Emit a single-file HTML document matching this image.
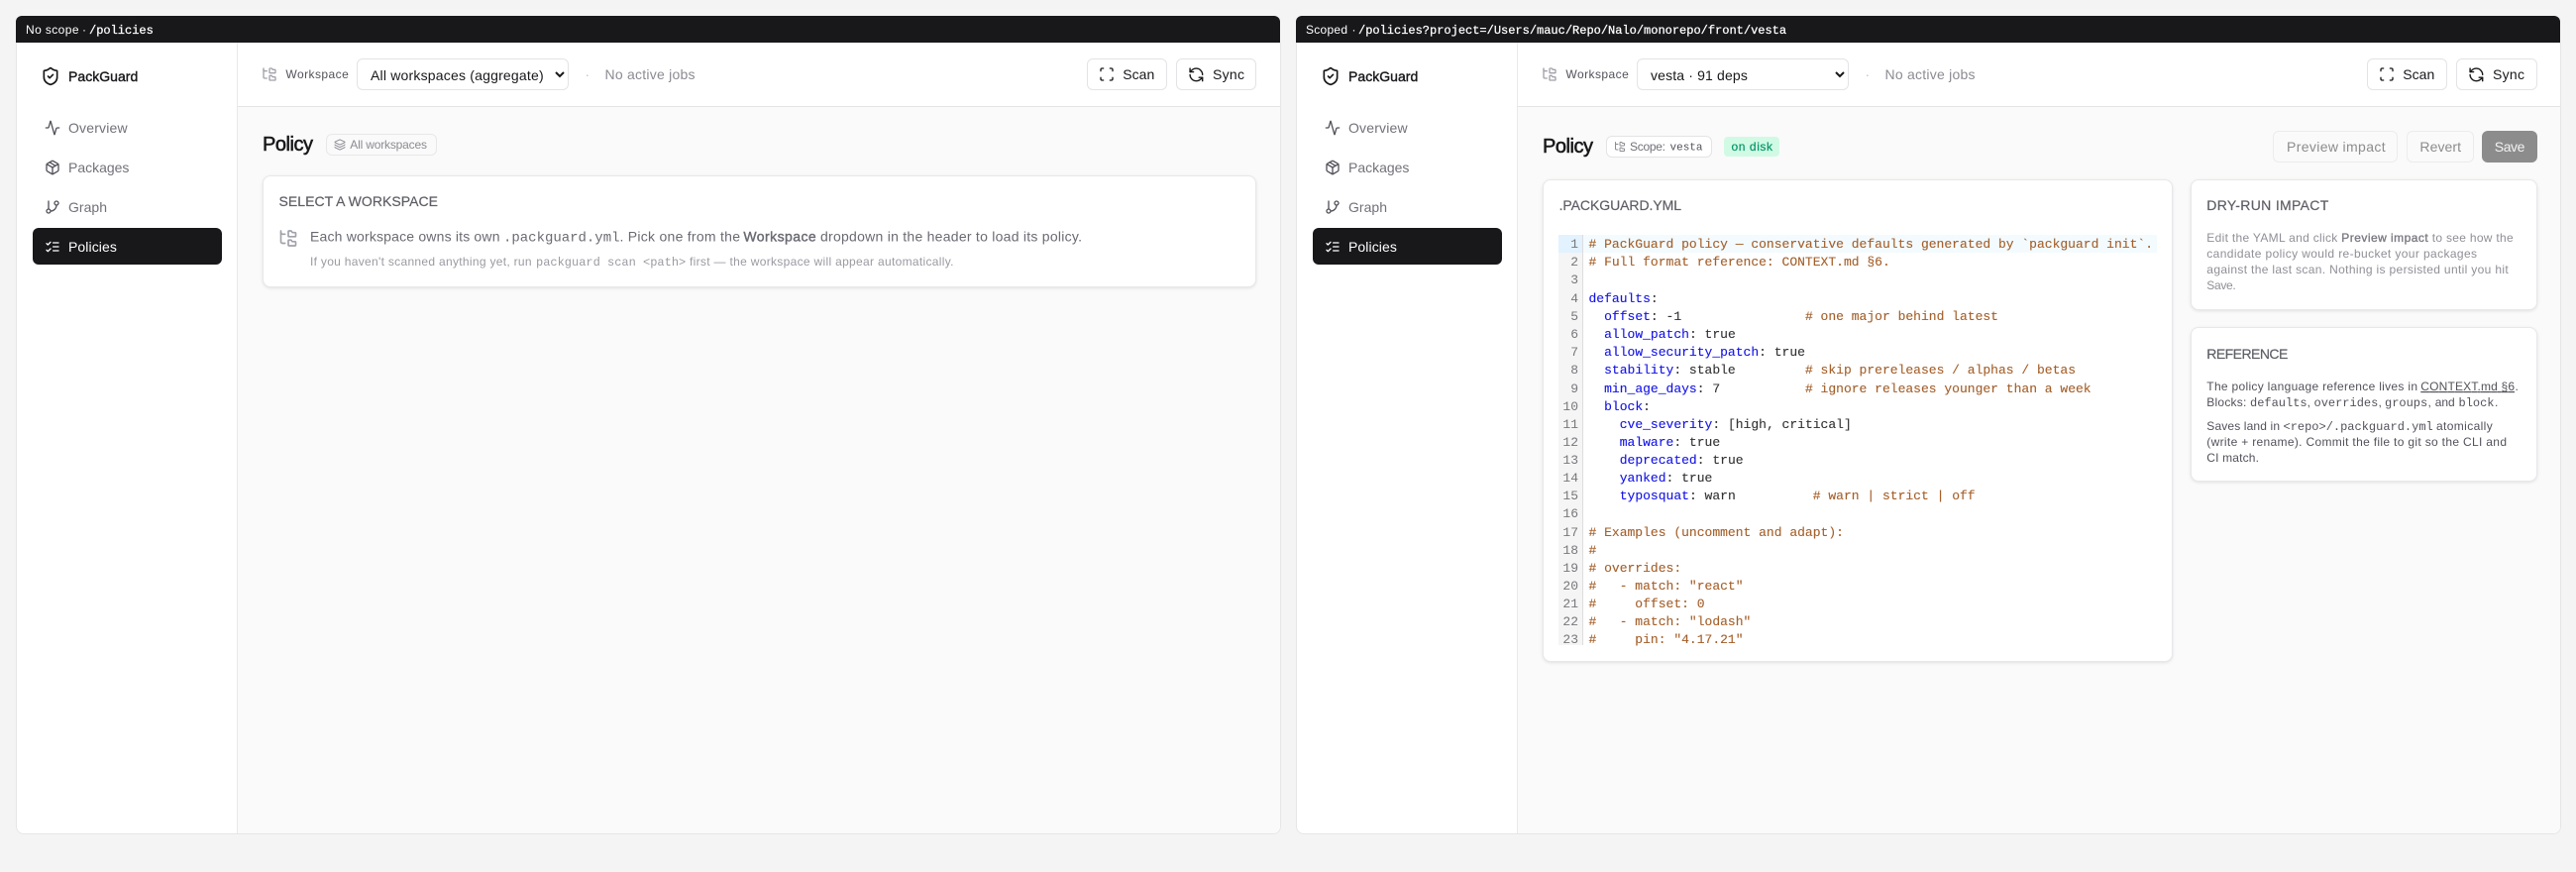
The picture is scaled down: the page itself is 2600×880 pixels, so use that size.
<!DOCTYPE html>
<html lang="en">
<head>
<meta charset="utf-8">
<title>PackGuard policies</title>
<style>
html,body{margin:0;padding:0;width:2600px;height:880px;overflow:hidden;background:#f4f4f4}
*{box-sizing:border-box}
.a{position:absolute}
.bar{background:#18181b;top:16px;height:27px;border-radius:6px 6px 0 0}
.panel{top:43px;height:799px;width:1277px;background:#fff;border:1px solid #e6e6e6;border-top:0;border-radius:0 0 8px 8px;overflow:hidden}
.side{left:222px;top:0;width:1px;height:800px;background:#e9e9eb}
.main{left:223px;top:65px;width:1060px;height:740px;background:#fafafa}
.hline{left:223px;top:64px;width:1060px;height:1px;background:#e4e4e7}
.act{left:16px;top:187px;width:191px;height:37px;background:#18181b;border-radius:6px}
.card{background:#fff;border:1px solid #e8e8ea;border-radius:8px;box-shadow:0 1px 3px rgba(0,0,0,.1)}
.btn{background:#fff;border:1px solid #e4e4e7;border-radius:6px}
.dis{background:#fafafa;border:1px solid #ececee;border-radius:6px}
select{position:absolute;top:59px;width:214px;height:32px;background:#fff;border:1px solid #e4e4e7;border-radius:6px;
font:14px "Liberation Sans",sans-serif;color:#18181b;padding:1px 0 0 9px;margin:0;outline:0}
svg.o{position:absolute;left:0;top:0;width:2600px;height:880px;filter:blur(.3px)}
svg text{font-family:"Liberation Sans",sans-serif;white-space:pre}
svg text.m{font-family:"Liberation Mono",monospace}
svg text.t{stroke:#fff;stroke-width:.25px}
svg text.h{stroke:#18181b}
svg text.sb{stroke:#5e5e66;stroke-width:.2px}
.ic{fill:none;stroke-linecap:round;stroke-linejoin:round;stroke-width:2}
.code text{font-family:"Liberation Mono",monospace;font-size:13px;fill:#333;stroke:#333;stroke-width:.12px}
.code .c{fill:#a4602b;stroke:#a4602b}.code .k{fill:#1414e6;stroke:#1414e6}
.n text{fill:#77777c;stroke:none;text-anchor:end}
</style>
</head>
<body>
<!-- left frame -->
<div class="a bar" style="left:16px;width:1276px"></div>
<div class="a panel" style="left:16px">
  <div class="a side"></div><div class="a main"></div><div class="a hline"></div><div class="a act"></div>
</div>
<div class="a btn" style="left:1097px;top:59px;width:81px;height:32px"></div>
<div class="a btn" style="left:1187px;top:59px;width:81px;height:32px"></div>
<div class="a" style="left:328.5px;top:135px;width:112px;height:22px;background:#fafafa;border:1px solid #e8e8ea;border-radius:6px"></div>
<div class="a card" style="left:265px;top:176.5px;width:1003px;height:113px"></div>
<select style="left:360px;letter-spacing:.2px"><option>All workspaces (aggregate)</option></select>

<!-- right frame -->
<div class="a bar" style="left:1308px;width:1276px"></div>
<div class="a panel" style="left:1308px">
  <div class="a side"></div><div class="a main"></div><div class="a hline"></div><div class="a act"></div>
</div>
<div class="a btn" style="left:2389px;top:59px;width:81px;height:32px"></div>
<div class="a btn" style="left:2479px;top:59px;width:81.5px;height:32px"></div>
<div class="a" style="left:1620.5px;top:137px;width:107.5px;height:22px;background:#fff;border:1px solid #e4e4e7;border-radius:6px"></div>
<div class="a" style="left:1740px;top:138px;width:56px;height:20px;background:#d1fae5;border-radius:4px"></div>
<div class="a dis" style="left:2294px;top:132px;width:126px;height:32px"></div>
<div class="a dis" style="left:2429px;top:132px;width:68px;height:32px"></div>
<div class="a" style="left:2505px;top:132px;width:55.5px;height:32px;background:#8c8c8d;border-radius:6px"></div>
<div class="a card" style="left:1557px;top:180.5px;width:636px;height:487px"></div>
<div class="a card" style="left:2211px;top:180.5px;width:350px;height:132.5px"></div>
<div class="a card" style="left:2211px;top:330px;width:350px;height:156px"></div>
<div class="a" style="left:1573px;top:237px;width:25px;height:414px;background:#f5f5f5;border-right:1px solid #ddd"></div>
<div class="a" style="left:1573px;top:237px;width:24px;height:18px;background:#e2f2ff"></div>
<div class="a" style="left:1598px;top:237px;width:579px;height:18px;background:#f3fbff"></div>
<select style="left:1652px;letter-spacing:.15px"><option>vesta · 91 deps</option></select>

<svg class="o" viewBox="0 0 2600 880" xmlns="http://www.w3.org/2000/svg">
<defs>
  <g id="shield"><path d="M20 13c0 5-3.5 7.5-7.66 8.95a1 1 0 0 1-.67-.01C7.5 20.5 4 18 4 13V6a1 1 0 0 1 1-1c2 0 4.5-1.2 6.24-2.72a1.17 1.17 0 0 1 1.52 0C14.51 3.81 17 5 19 5a1 1 0 0 1 1 1z"/><path d="m9 12 2 2 4-4"/></g>
  <g id="activity"><path d="M22 12h-2.48a2 2 0 0 0-1.93 1.46l-2.35 8.36a.25.25 0 0 1-.48 0L9.24 2.18a.25.25 0 0 0-.48 0l-2.35 8.36A2 2 0 0 1 4.49 12H2"/></g>
  <g id="pkg"><path d="M11 21.73a2 2 0 0 0 2 0l7-4A2 2 0 0 0 21 16V8a2 2 0 0 0-1-1.73l-7-4a2 2 0 0 0-2 0l-7 4A2 2 0 0 0 3 8v8a2 2 0 0 0 1 1.73z"/><path d="M12 22V12"/><path d="m3.3 7 8.7 5 8.7-5"/><path d="m7.5 4.27 9 5.15"/></g>
  <g id="branch"><path d="M6 3v12"/><circle cx="18" cy="6" r="3"/><circle cx="6" cy="18" r="3"/><path d="M18 9a9 9 0 0 1-9 9"/></g>
  <g id="list"><path d="m3 17 2 2 4-4"/><path d="m3 7 2 2 4-4"/><path d="M13 6h8"/><path d="M13 12h8"/><path d="M13 18h8"/></g>
  <g id="tree"><path d="M20 10a1 1 0 0 0 1-1V6a1 1 0 0 0-1-1h-2.5a1 1 0 0 1-.8-.4l-.9-1.2A1 1 0 0 0 15 3h-2a1 1 0 0 0-1 1v5a1 1 0 0 0 1 1Z"/><path d="M20 21a1 1 0 0 0 1-1v-3a1 1 0 0 0-1-1h-2.9a1 1 0 0 1-.88-.55l-.42-.85a1 1 0 0 0-.92-.6H13a1 1 0 0 0-1 1v5a1 1 0 0 0 1 1Z"/><path d="M3 5a2 2 0 0 0 2 2h3"/><path d="M3 3v13a2 2 0 0 0 2 2h3"/></g>
  <g id="scan"><path d="M3 7V5a2 2 0 0 1 2-2h2"/><path d="M17 3h2a2 2 0 0 1 2 2v2"/><path d="M21 17v2a2 2 0 0 1-2 2h-2"/><path d="M7 21H5a2 2 0 0 1-2-2v-2"/></g>
  <g id="sync"><path d="M21 12a9 9 0 0 0-9-9 9.75 9.75 0 0 0-6.74 2.74L3 8"/><path d="M3 3v5h5"/><path d="M3 12a9 9 0 0 0 9 9 9.75 9.75 0 0 0 6.74-2.74L21 16"/><path d="M16 16h5v5"/></g>
  <g id="layers"><path d="M12.83 2.18a2 2 0 0 0-1.66 0L2.6 6.08a1 1 0 0 0 0 1.83l8.58 3.91a2 2 0 0 0 1.66 0l8.58-3.9a1 1 0 0 0 0-1.83z"/><path d="M2 12a1 1 0 0 0 .58.91l8.6 3.91a2 2 0 0 0 1.65 0l8.58-3.9A1 1 0 0 0 22 12"/><path d="M2 17a1 1 0 0 0 .58.91l8.6 3.91a2 2 0 0 0 1.65 0l8.58-3.9A1 1 0 0 0 22 17"/></g>
</defs>

<!-- LEFT FRAME TEXT -->
<text x="26" y="34" font-size="12" fill="#fff" textLength="53.5">No scope</text>
<text x="83" y="34" font-size="12" fill="#fff">·</text>
<text class="m t" x="90" y="34" font-size="12" fill="#fff">/policies</text>

<g class="ic" stroke="#18181b"><use href="#shield" transform="translate(41,67) scale(.8333)"/></g>
<text x="69" y="82" font-size="14" fill="#18181b" stroke="#18181b" stroke-width=".4" textLength="70.3">PackGuard</text>
<g class="ic" stroke="#52525b">
  <use href="#activity" transform="translate(45,121) scale(.6667)"/>
  <use href="#pkg" transform="translate(45,161) scale(.6667)"/>
  <use href="#branch" transform="translate(45,201) scale(.6667)"/>
</g>
<g class="ic" stroke="#fff"><use href="#list" transform="translate(45,241) scale(.6667)"/></g>
<text x="69" y="134" font-size="14" fill="#71717a" textLength="59.6">Overview</text>
<text x="69" y="174" font-size="14" fill="#71717a" textLength="61.4">Packages</text>
<text x="69" y="214" font-size="14" fill="#71717a" textLength="39">Graph</text>
<text x="69" y="254" font-size="14" fill="#fff" textLength="48.9">Policies</text>

<g class="ic" stroke="#a1a1aa"><use href="#tree" transform="translate(264,67) scale(.6667)"/></g>
<text x="288.4" y="79" font-size="12" fill="#52525b" textLength="63.4">Workspace</text>
<text x="590.5" y="80" font-size="14" fill="#c4c4c8">·</text>
<text x="610.5" y="80" font-size="14" fill="#8b8b93" textLength="91">No active jobs</text>

<g class="ic" stroke="#18181b">
  <use href="#scan" transform="translate(1109,67) scale(.6667)"/>
  <use href="#sync" transform="translate(1199,67) scale(.7)"/>
</g>
<text x="1133.3" y="80" font-size="14" fill="#18181b" textLength="32">Scan</text>
<text x="1224" y="80" font-size="14" fill="#18181b" textLength="32">Sync</text>

<text x="265" y="152" font-size="20" fill="#18181b" stroke="#18181b" stroke-width=".55" textLength="51">Policy</text>
<g class="ic" stroke="#8b8b93"><use href="#layers" transform="translate(337,140) scale(.5)"/></g>
<text x="353.3" y="150" font-size="12" fill="#8b8b93" textLength="77.7">All workspaces</text>

<text class="sb" x="281.5" y="208" font-size="14" fill="#5e5e66" textLength="160.5">SELECT A WORKSPACE</text>
<g class="ic" stroke="#a1a1aa"><use href="#tree" transform="translate(281,230.5) scale(.8333)"/></g>
<text x="313" y="243.5" font-size="14" fill="#6a6a73" textLength="191.5">Each workspace owns its own</text>
<text class="m" x="508" y="243.5" font-size="14" fill="#6a6a73" textLength="117.5">.packguard.yml</text>
<text x="625.5" y="243.5" font-size="14" fill="#6a6a73" textLength="121.5">. Pick one from the</text>
<text x="750.4" y="243.5" font-size="14" fill="#6a6a73" stroke="#6a6a73" stroke-width=".4" textLength="73.3">Workspace</text>
<text x="828" y="243.5" font-size="14" fill="#6a6a73" textLength="264">dropdown in the header to load its policy.</text>
<text x="313" y="268" font-size="12" fill="#9a9aa2" textLength="223.6">If you haven't scanned anything yet, run</text>
<text class="m" x="541" y="268" font-size="12" fill="#9a9aa2">packguard scan &lt;path&gt;</text>
<text x="696" y="268" font-size="12" fill="#9a9aa2" textLength="266.5">first — the workspace will appear automatically.</text>

<!-- RIGHT FRAME TEXT -->
<text x="1318" y="34" font-size="12" fill="#fff" textLength="42">Scoped</text>
<text x="1364.5" y="34" font-size="12" fill="#fff">·</text>
<text class="m t" x="1371" y="34" font-size="12" fill="#fff">/policies?project=/Users/mauc/Repo/Nalo/monorepo/front/vesta</text>

<g class="ic" stroke="#18181b"><use href="#shield" transform="translate(1333,67) scale(.8333)"/></g>
<text x="1361" y="82" font-size="14" fill="#18181b" stroke="#18181b" stroke-width=".4" textLength="70.3">PackGuard</text>
<g class="ic" stroke="#52525b">
  <use href="#activity" transform="translate(1337,121) scale(.6667)"/>
  <use href="#pkg" transform="translate(1337,161) scale(.6667)"/>
  <use href="#branch" transform="translate(1337,201) scale(.6667)"/>
</g>
<g class="ic" stroke="#fff"><use href="#list" transform="translate(1337,241) scale(.6667)"/></g>
<text x="1361" y="134" font-size="14" fill="#71717a" textLength="59.6">Overview</text>
<text x="1361" y="174" font-size="14" fill="#71717a" textLength="61.4">Packages</text>
<text x="1361" y="214" font-size="14" fill="#71717a" textLength="39">Graph</text>
<text x="1361" y="254" font-size="14" fill="#fff" textLength="48.9">Policies</text>

<g class="ic" stroke="#a1a1aa"><use href="#tree" transform="translate(1556,67) scale(.6667)"/></g>
<text x="1580.4" y="79" font-size="12" fill="#52525b" textLength="63.4">Workspace</text>
<text x="1882.5" y="80" font-size="14" fill="#c4c4c8">·</text>
<text x="1902.5" y="80" font-size="14" fill="#8b8b93" textLength="91">No active jobs</text>

<g class="ic" stroke="#18181b">
  <use href="#scan" transform="translate(2401,67) scale(.6667)"/>
  <use href="#sync" transform="translate(2491,67) scale(.7)"/>
</g>
<text x="2425.3" y="80" font-size="14" fill="#18181b" textLength="32">Scan</text>
<text x="2516" y="80" font-size="14" fill="#18181b" textLength="32">Sync</text>

<text x="1557" y="154" font-size="20" fill="#18181b" stroke="#18181b" stroke-width=".55" textLength="51">Policy</text>
<g class="ic" stroke="#8b8b93"><use href="#tree" transform="translate(1629,142) scale(.5)"/></g>
<text x="1645" y="152" font-size="12" fill="#71717a" textLength="36">Scope:</text>
<text class="m" x="1685.5" y="151.5" font-size="11" fill="#52525b">vesta</text>
<text x="1747.5" y="152" font-size="12" fill="#059669" stroke="#059669" stroke-width=".2" textLength="41.5">on disk</text>

<text x="2308" y="153" font-size="14" fill="#8c8c8d" textLength="99.6">Preview impact</text>
<text x="2442.4" y="153" font-size="14" fill="#8c8c8d" textLength="41.6">Revert</text>
<text x="2517.8" y="153" font-size="14" fill="#f2f2f2" textLength="30.6">Save</text>

<text class="sb" x="1573.6" y="212" font-size="14" fill="#5e5e66" textLength="123.4">.PACKGUARD.YML</text>

<g class="n code">
<text x="1593" y="250">1</text><text x="1593" y="268">2</text><text x="1593" y="286">3</text><text x="1593" y="305">4</text><text x="1593" y="323">5</text><text x="1593" y="341">6</text><text x="1593" y="359">7</text><text x="1593" y="377">8</text><text x="1593" y="396">9</text><text x="1593" y="414">10</text><text x="1593" y="432">11</text><text x="1593" y="450">12</text><text x="1593" y="468">13</text><text x="1593" y="486">14</text><text x="1593" y="504">15</text><text x="1593" y="522">16</text><text x="1593" y="541">17</text><text x="1593" y="559">18</text><text x="1593" y="577">19</text><text x="1593" y="595">20</text><text x="1593" y="613">21</text><text x="1593" y="631">22</text><text x="1593" y="649">23</text>
</g>
<g class="code">
<text x="1603.5" y="250" class="c"># PackGuard policy — conservative defaults generated by `packguard init`.</text>
<text x="1603.5" y="268" class="c"># Full format reference: CONTEXT.md §6.</text>
<text x="1603.5" y="305"><tspan class="k">defaults</tspan>:</text>
<text x="1603.5" y="323">  <tspan class="k">offset</tspan>: -1                <tspan class="c"># one major behind latest</tspan></text>
<text x="1603.5" y="341">  <tspan class="k">allow_patch</tspan>: true</text>
<text x="1603.5" y="359">  <tspan class="k">allow_security_patch</tspan>: true</text>
<text x="1603.5" y="377">  <tspan class="k">stability</tspan>: stable         <tspan class="c"># skip prereleases / alphas / betas</tspan></text>
<text x="1603.5" y="396">  <tspan class="k">min_age_days</tspan>: 7           <tspan class="c"># ignore releases younger than a week</tspan></text>
<text x="1603.5" y="414">  <tspan class="k">block</tspan>:</text>
<text x="1603.5" y="432">    <tspan class="k">cve_severity</tspan>: [high, critical]</text>
<text x="1603.5" y="450">    <tspan class="k">malware</tspan>: true</text>
<text x="1603.5" y="468">    <tspan class="k">deprecated</tspan>: true</text>
<text x="1603.5" y="486">    <tspan class="k">yanked</tspan>: true</text>
<text x="1603.5" y="504">    <tspan class="k">typosquat</tspan>: warn          <tspan class="c"># warn | strict | off</tspan></text>
<text x="1603.5" y="541" class="c"># Examples (uncomment and adapt):</text>
<text x="1603.5" y="559" class="c">#</text>
<text x="1603.5" y="577" class="c"># overrides:</text>
<text x="1603.5" y="595" class="c">#   - match: "react"</text>
<text x="1603.5" y="613" class="c">#     offset: 0</text>
<text x="1603.5" y="631" class="c">#   - match: "lodash"</text>
<text x="1603.5" y="649" class="c">#     pin: "4.17.21"</text>
</g>

<text class="sb" x="2227.3" y="212" font-size="14" fill="#5e5e66" textLength="123">DRY-RUN IMPACT</text>
<text x="2227.3" y="244" font-size="12" fill="#8f8f97" textLength="132">Edit the YAML and click</text>
<text x="2363.3" y="244" font-size="12" fill="#7a7a83" stroke="#7a7a83" stroke-width=".35" textLength="87.4">Preview impact</text>
<text x="2454.7" y="244" font-size="12" fill="#8f8f97" textLength="82">to see how the</text>
<text x="2227.3" y="260" font-size="12" fill="#8f8f97" textLength="272.7">candidate policy would re-bucket your packages</text>
<text x="2227.3" y="276" font-size="12" fill="#8f8f97" textLength="304.4">against the last scan. Nothing is persisted until you hit</text>
<text x="2227.3" y="292" font-size="12" fill="#8f8f97" textLength="29.4">Save.</text>

<text class="sb" x="2227.3" y="362" font-size="14" fill="#5e5e66" textLength="82">REFERENCE</text>
<text x="2227.3" y="394" font-size="12" fill="#52525b" textLength="212.7">The policy language reference lives in</text>
<text x="2443.3" y="394" font-size="12" fill="#52525b" textLength="94.7" text-decoration="underline">CONTEXT.md §6</text>
<text x="2538.5" y="394" font-size="12" fill="#52525b">.</text>
<text x="2227.3" y="410" font-size="12" fill="#52525b" textLength="40">Blocks:</text>
<text class="m" x="2271" y="410" font-size="12" fill="#52525b">defaults</text>
<text x="2328.6" y="410" font-size="12" fill="#52525b">,</text>
<text class="m" x="2335.5" y="410" font-size="12" fill="#52525b">overrides</text>
<text x="2400.5" y="410" font-size="12" fill="#52525b">,</text>
<text class="m" x="2407" y="410" font-size="12" fill="#52525b">groups</text>
<text x="2450.5" y="410" font-size="12" fill="#52525b">,</text>
<text x="2457.7" y="410" font-size="12" fill="#52525b" textLength="20">and</text>
<text class="m" x="2481.5" y="410" font-size="12" fill="#52525b">block</text>
<text x="2518" y="410" font-size="12" fill="#52525b">.</text>
<text x="2227.3" y="434" font-size="12" fill="#52525b" textLength="73.7">Saves land in</text>
<text class="m" x="2304.5" y="434" font-size="12" fill="#52525b">&lt;repo&gt;/.packguard.yml</text>
<text x="2459" y="434" font-size="12" fill="#52525b" textLength="56.7">atomically</text>
<text x="2227.3" y="450" font-size="12" fill="#52525b" textLength="302.7">(write + rename). Commit the file to git so the CLI and</text>
<text x="2227.3" y="466" font-size="12" fill="#52525b" textLength="52.7">CI match.</text>
</svg>
</body>
</html>
